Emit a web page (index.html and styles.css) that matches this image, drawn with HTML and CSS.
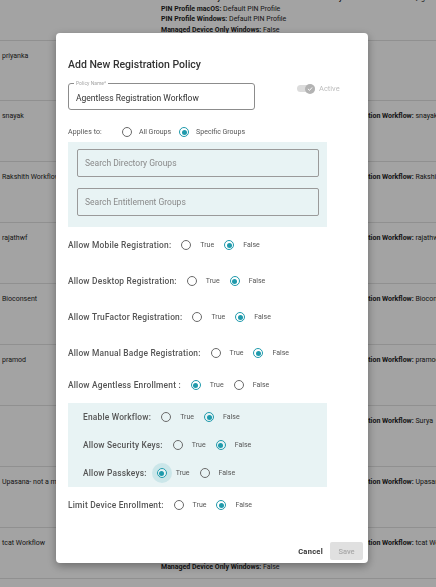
FILE: index.html
```html
<!DOCTYPE html>
<html lang="en">
<head>
    <meta charset="UTF-8">
    <meta name="viewport" content="width=device-width, initial-scale=1.0">
    <title>Registration Policies</title>
    <link rel="stylesheet" href="styles.css">
</head>
<body>

    <div class="list">
        <div class="row row-top">
            <div class="name"></div>
            <div class="details">
                <p><b>Enrollment Identity Verification :</b> False <b>Enrollment Identity Verification Workflow:</b> [agentless]</p>
                <p><b>PIN Profile macOS:</b> Default PIN Profile</p>
                <p><b>PIN Profile Windows:</b> Default PIN Profile</p>
                <p><b>Managed Device Only Windows:</b> False</p>
            </div>
        </div>
        <div class="row row-first">
            <div class="name">priyanka</div>
            <div class="details"></div>
        </div>
        <div class="row">
            <div class="name">snayak</div>
            <div class="details">
                <p><b>Enrollment Identity Verification :</b> False <b>Enrollment Identity Verification Workflow:</b> snayak</p>
            </div>
        </div>
        <div class="row">
            <div class="name">Rakshith Workflow</div>
            <div class="details">
                <p><b>Enrollment Identity Verification :</b> False <b>Enrollment Identity Verification Workflow:</b> Rakshith Workflow</p>
            </div>
        </div>
        <div class="row">
            <div class="name">rajathwf</div>
            <div class="details">
                <p><b>Enrollment Identity Verification :</b> False <b>Enrollment Identity Verification Workflow:</b> rajathwf</p>
            </div>
        </div>
        <div class="row">
            <div class="name">Bioconsent</div>
            <div class="details">
                <p><b>Enrollment Identity Verification :</b> False <b>Enrollment Identity Verification Workflow:</b> Bioconsent</p>
            </div>
        </div>
        <div class="row">
            <div class="name">pramod</div>
            <div class="details">
                <p><b>Enrollment Identity Verification :</b> False <b>Enrollment Identity Verification Workflow:</b> pramod</p>
            </div>
        </div>
        <div class="row">
            <div class="name"></div>
            <div class="details">
                <p><b>Enrollment Identity Verification :</b> False <b>Enrollment Identity Verification Workflow:</b> Surya</p>
            </div>
        </div>
        <div class="row">
            <div class="name">Upasana- not a member</div>
            <div class="details">
                <p><b>Enrollment Identity Verification :</b> False <b>Enrollment Identity Verification Workflow:</b> Upasana</p>
            </div>
        </div>
        <div class="row row-short">
            <div class="name">tcat Workflow</div>
            <div class="details">
                <p><b>Enrollment Identity Verification :</b> False <b>Enrollment Identity Verification Workflow:</b> tcat Workflow</p>
                <p><b>PIN Profile Windows:</b> Default PIN Profile</p>
                <p><b>Managed Device Only Windows:</b> False</p>
            </div>
        </div>
        <div class="row">
            <div class="name"></div>
            <div class="details">
                <p><b>Registration Allowed:</b> True</p>
            </div>
        </div>
    </div>

    <div class="backdrop">
        <div class="modal">
            <h2 class="modal-title">Add New Registration Policy</h2>

            <div class="policy-row">
                <div class="outlined">
                    <span class="outlined-label">Policy Name*</span>
                    <span class="outlined-value">Agentless Registration Workflow</span>
                </div>
                <div class="switch">
                    <span class="switch-track">
                        <span class="switch-thumb">
                            <svg width="6" height="6" viewBox="0 0 10 10"><path d="M2 5.2 L4.2 7.3 L8 3" fill="none" stroke="#fff" stroke-width="1.6" stroke-linecap="round" stroke-linejoin="round"/></svg>
                        </span>
                    </span>
                    <span class="switch-text">Active</span>
                </div>
            </div>

            <div class="applies">
                <span class="applies-label">Applies to:</span>
                <span class="opt"><span class="radio"></span>All Groups</span>
                <span class="opt"><span class="radio checked"></span>Specific Groups</span>
            </div>

            <div class="group-box">
                <div class="search">Search Directory Groups</div>
                <div class="search">Search Entitlement Groups</div>
            </div>

            <div class="fields">
                <div class="field">
                    <span class="field-label">Allow Mobile Registration:</span>
                    <span class="opt"><span class="radio"></span>True</span>
                    <span class="opt"><span class="radio checked"></span>False</span>
                </div>
                <div class="field">
                    <span class="field-label">Allow Desktop Registration:</span>
                    <span class="opt"><span class="radio"></span>True</span>
                    <span class="opt"><span class="radio checked"></span>False</span>
                </div>
                <div class="field">
                    <span class="field-label">Allow TruFactor Registration:</span>
                    <span class="opt"><span class="radio"></span>True</span>
                    <span class="opt"><span class="radio checked"></span>False</span>
                </div>
                <div class="field">
                    <span class="field-label">Allow Manual Badge Registration:</span>
                    <span class="opt"><span class="radio"></span>True</span>
                    <span class="opt"><span class="radio checked"></span>False</span>
                </div>
                <div class="field field-tight">
                    <span class="field-label">Allow Agentless Enrollment :</span>
                    <span class="opt"><span class="radio checked"></span>True</span>
                    <span class="opt"><span class="radio"></span>False</span>
                </div>
            </div>

            <div class="sub-box">
                <div class="field">
                    <span class="field-label">Enable Workflow:</span>
                    <span class="opt"><span class="radio"></span>True</span>
                    <span class="opt"><span class="radio checked"></span>False</span>
                </div>
                <div class="field">
                    <span class="field-label">Allow Security Keys:</span>
                    <span class="opt"><span class="radio"></span>True</span>
                    <span class="opt"><span class="radio checked"></span>False</span>
                </div>
                <div class="field">
                    <span class="field-label">Allow Passkeys:</span>
                    <span class="opt"><span class="radio checked focused"></span>True</span>
                    <span class="opt"><span class="radio"></span>False</span>
                </div>
            </div>

            <div class="field field-last">
                <span class="field-label">Limit Device Enrollment:</span>
                <span class="opt"><span class="radio"></span>True</span>
                <span class="opt"><span class="radio checked"></span>False</span>
            </div>

            <div class="modal-footer">
                <button type="button" class="btn-cancel">Cancel</button>
                <button type="button" class="btn-save" disabled>Save</button>
            </div>
        </div>
    </div>

</body>
</html>
```

FILE: styles.css
```css
body { margin: 0; font-family: Roboto, "Liberation Sans", sans-serif; background: #fff; overflow: hidden; }

/* page behind the dialog */
.list { margin-top: -17px; }
.row { display: flex; height: 61px; box-sizing: border-box; border-bottom: 1px solid #e2e2e2; padding-top: 10px; font-size: 7px; line-height: 10.5px; color: #1e1e1e; }
.row-top { height: 58px; }
.row-first { height: 60px; }
.row-short { height: 51px; padding-top: 9px; line-height: 12px; }
.name { width: 161px; flex: none; padding-left: 2px; box-sizing: border-box; white-space: nowrap; overflow: hidden; }
.details { white-space: nowrap; }
.details p { margin: 0; }

/* dialog */
.backdrop { position: fixed; top: 0; left: 0; right: 0; bottom: 0; background: rgba(0, 0, 0, 0.36); }
.modal { display: flex; flex-direction: column; width: 312px; height: 530px; margin: 33px 0 0 56px; box-sizing: border-box; padding: 25px 12px 3px 12px; background: #fff; border-radius: 4px; box-shadow: 0 3px 10px rgba(0, 0, 0, 0.35); color: #555; }
.modal-title { margin: 0; font-size: 10.5px; line-height: 14px; font-weight: 500; color: #333; }

.policy-row { display: flex; align-items: flex-start; margin-top: 11px; }
.outlined { position: relative; width: 187px; height: 27px; box-sizing: border-box; border: 1px solid #8c8c8c; border-radius: 3px; padding: 0 7px; display: flex; align-items: center; }
.outlined-label { position: absolute; top: -4px; left: 5px; padding: 0 2px; background: #fff; font-size: 5px; line-height: 7px; color: #a5a5a5; }
.outlined-value { font-size: 8.5px; color: #333; padding-top: 2px; }

.switch { display: flex; align-items: center; margin: 1px 0 0 42px; }
.switch-track { display: flex; justify-content: flex-end; align-items: center; width: 18px; height: 7px; border-radius: 4px; background: #dcdcdc; }
.switch-thumb { display: flex; align-items: center; justify-content: center; width: 10px; height: 10px; border-radius: 50%; background: #b3b3b3; }
.switch-text { margin-left: 4px; font-size: 7.5px; color: #bdbdbd; }

.applies { display: flex; align-items: center; height: 12px; margin-top: 16px; }
.applies-label { font-size: 7px; color: #555; margin-right: 20px; letter-spacing: 0.1px; }
.applies .opt { font-size: 7px; }
.applies .radio { margin-right: 7px; }
.applies .opt + .opt { margin-left: 8px; }

.group-box { margin-top: 4px; padding: 7px 8px 11px 9px; background: #e8f3f4; display: flex; flex-direction: column; gap: 11px; width: 259px; box-sizing: border-box; }
.search { height: 28px; box-sizing: border-box; border: 1px solid #9a9a9a; border-radius: 2px; padding-left: 7px; display: flex; align-items: center; font-size: 8.5px; color: #8a8a8a; }

.fields { display: flex; flex-direction: column; gap: 24px; margin-top: 12px; }
.fields .field-tight { margin-top: -4px; }
.field { display: flex; align-items: center; height: 12px; }
.field-label { font-size: 8.4px; font-weight: 500; color: #555; margin-right: 10px; letter-spacing: 0.2px; white-space: nowrap; }
.opt { display: flex; align-items: center; font-size: 7px; color: #555; white-space: nowrap; }
.opt + .opt { margin-left: 10px; }
.radio { position: relative; flex: none; width: 10px; height: 10px; box-sizing: border-box; border: 1px solid #6a6a6a; border-radius: 50%; margin-right: 9px; }
.radio.checked { border-color: #1f9aac; }
.radio.checked::after { content: ""; position: absolute; top: 1.5px; left: 1.5px; width: 5px; height: 5px; border-radius: 50%; background: #1f9aac; }
.radio.focused { box-shadow: 0 0 0 5px rgba(31, 154, 172, 0.14); }

.sub-box { display: flex; flex-direction: column; gap: 16px; width: 259px; box-sizing: border-box; margin-top: 12px; padding: 8px 15px; background: #e8f3f4; }
.field-last { margin-top: 12px; }

.modal-footer { display: flex; justify-content: flex-end; align-items: center; gap: 7px; margin: auto -7px 0 0; }
.modal-footer button { font-family: Roboto, "Liberation Sans", sans-serif; border: none; border-radius: 2px; font-size: 7.5px; }
.btn-cancel { background: none; padding: 0; font-weight: 700; color: #333; letter-spacing: 0.3px; }
.btn-save { width: 33px; height: 18px; padding: 0; background: #e0e0e0; color: #a8a8a8; font-weight: 500; }
```
